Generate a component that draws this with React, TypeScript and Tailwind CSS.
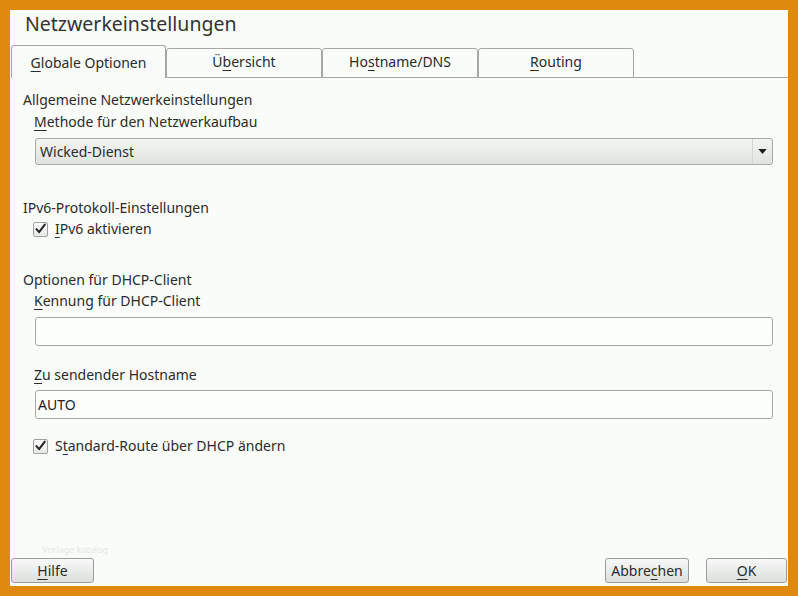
const tabs = [
  { pre: "", key: "G", post: "lobale Optionen", active: true, w: "w-[155px]" },
  { pre: "Ü", key: "b", post: "ersicht", active: false, w: "w-[156px]" },
  { pre: "Ho", key: "s", post: "tname/DNS", active: false, w: "w-[156px]" },
  { pre: "", key: "R", post: "outing", active: false, w: "w-[156px]" },
];

function Mn({ pre, k, post }: { pre: string; k: string; post: string }) {
  return (
    <span>
      {pre}
      <span className="underline decoration-1 underline-offset-[3px]">{k}</span>
      {post}
    </span>
  );
}

function Check() {
  return (
    <span className="flex h-[15px] w-[15px] items-center justify-center rounded-[2px] border border-[#9fa39f] bg-gradient-to-b from-[#fbfcfb] to-[#e6e8e6]">
      <svg viewBox="0 0 14 14" className="h-[14px] w-[14px]" aria-hidden="true">
        <path
          d="M2.6 7.2l2.9 3.2L11.6 2.2"
          fill="none"
          stroke="#262626"
          strokeWidth="2.2"
          strokeLinecap="round"
          strokeLinejoin="round"
        />
      </svg>
    </span>
  );
}

function Button({ children, w }: { children: React.ReactNode; w: string }) {
  return (
    <button
      className={`flex h-[25px] ${w} items-center justify-center rounded-[3px] border border-[#9a9d9a] bg-gradient-to-b from-[#f8f9f8] to-[#dcdfdc] text-[14px] leading-[20px] text-[#2b2b2b]`}
    >
      {children}
    </button>
  );
}

export default function App() {
  return (
    <div
      className="h-[596px] w-[798px] bg-[#df8a0e] p-[10px]"
      style={{ fontFamily: '"Noto Sans", "DejaVu Sans", sans-serif' }}
    >
      <div className="relative flex h-full flex-col bg-[#f9fcf9] text-[#2b2b2b]">
        <div className="h-[35px] pl-[15px] pt-[2px] text-[19.5px] leading-[24px] text-[#333]">
          Netzwerkeinstellungen
        </div>

        <div className="flex h-[33px] items-end pl-[1px] text-[14px] leading-[20px]">
          {tabs.map((t) =>
            t.active ? (
              <div
                key={t.key}
                className={`flex h-[33px] ${t.w} items-center justify-center rounded-t-[3px] border-x border-t border-[#a4a7a4] pt-[1px] bg-[#f9fcf9]`}
              >
                <Mn pre={t.pre} k={t.key} post={t.post} />
              </div>
            ) : (
              <div
                key={t.key}
                className={`flex h-[30px] ${t.w} items-center justify-center rounded-t-[3px] border border-[#a4a7a4] pb-[2px]`}
              >
                <Mn pre={t.pre} k={t.key} post={t.post} />
              </div>
            )
          )}
          <div className="h-[1px] flex-1 bg-[#a4a7a4]" />
        </div>

        <div className="flex flex-col pl-[13px] pr-[15px] pt-[12px] text-[14px] leading-[20px]">
          <div>Allgemeine Netzwerkeinstellungen</div>
          <div className="mt-[2px] pl-[11px]">
            <Mn pre="" k="M" post="ethode für den Netzwerkaufbau" />
          </div>
          <div className="ml-[12px] mt-[6px] flex h-[27px] items-center rounded-[3px] border border-[#a6a9a6] bg-gradient-to-b from-[#f3f5f3] to-[#e0e3e0]">
            <span className="flex-1 pl-[4px]">Wicked-Dienst</span>
            <span className="flex h-full w-[20px] items-center justify-center border-l border-[#d3d6d3]">
              <svg viewBox="0 0 10 6" className="h-[5px] w-[9px]" aria-hidden="true">
                <path d="M0 0h10L5 6z" fill="#1e1e1e" />
              </svg>
            </span>
          </div>

          <div className="mt-[33px]">IPv6-Protokoll-Einstellungen</div>
          <div className="mt-[1px] flex items-center gap-[7px] pl-[10px]">
            <Check />
            <Mn pre="" k="I" post="Pv6 aktivieren" />
          </div>

          <div className="mt-[31px]">Optionen für DHCP-Client</div>
          <div className="mt-[1px] pl-[11px]">
            <Mn pre="" k="K" post="ennung für DHCP-Client" />
          </div>
          <div className="ml-[12px] mt-[6px] h-[29px] rounded-[3px] border border-[#a6a9a6] bg-[#fcfefc]" />

          <div className="mt-[19px] pl-[11px]">
            <Mn pre="" k="Z" post="u sendender Hostname" />
          </div>
          <div className="ml-[12px] mt-[5px] flex h-[29px] items-center rounded-[3px] border border-[#a6a9a6] bg-[#fcfefc] pl-[2px] text-[#1e1e1e]">
            AUTO
          </div>

          <div className="mt-[17px] flex items-center gap-[7px] pl-[10px]">
            <Check />
            <Mn pre="S" k="t" post="andard-Route über DHCP ändern" />
          </div>
        </div>

        <div className="absolute left-[32px] top-[534px] text-[9px] leading-[12px] text-[#e3e8e3]">
          Vorlage katalog
        </div>

        <div className="mt-auto flex items-center px-[1px] pb-[3px]">
          <Button w="w-[83px]">
            <Mn pre="" k="H" post="ilfe" />
          </Button>
          <div className="flex-1" />
          <Button w="w-[84px]">
            <Mn pre="Abbre" k="c" post="hen" />
          </Button>
          <div className="w-[17px]" />
          <Button w="w-[81px]">
            <Mn pre="" k="O" post="K" />
          </Button>
        </div>
      </div>
    </div>
  );
}
